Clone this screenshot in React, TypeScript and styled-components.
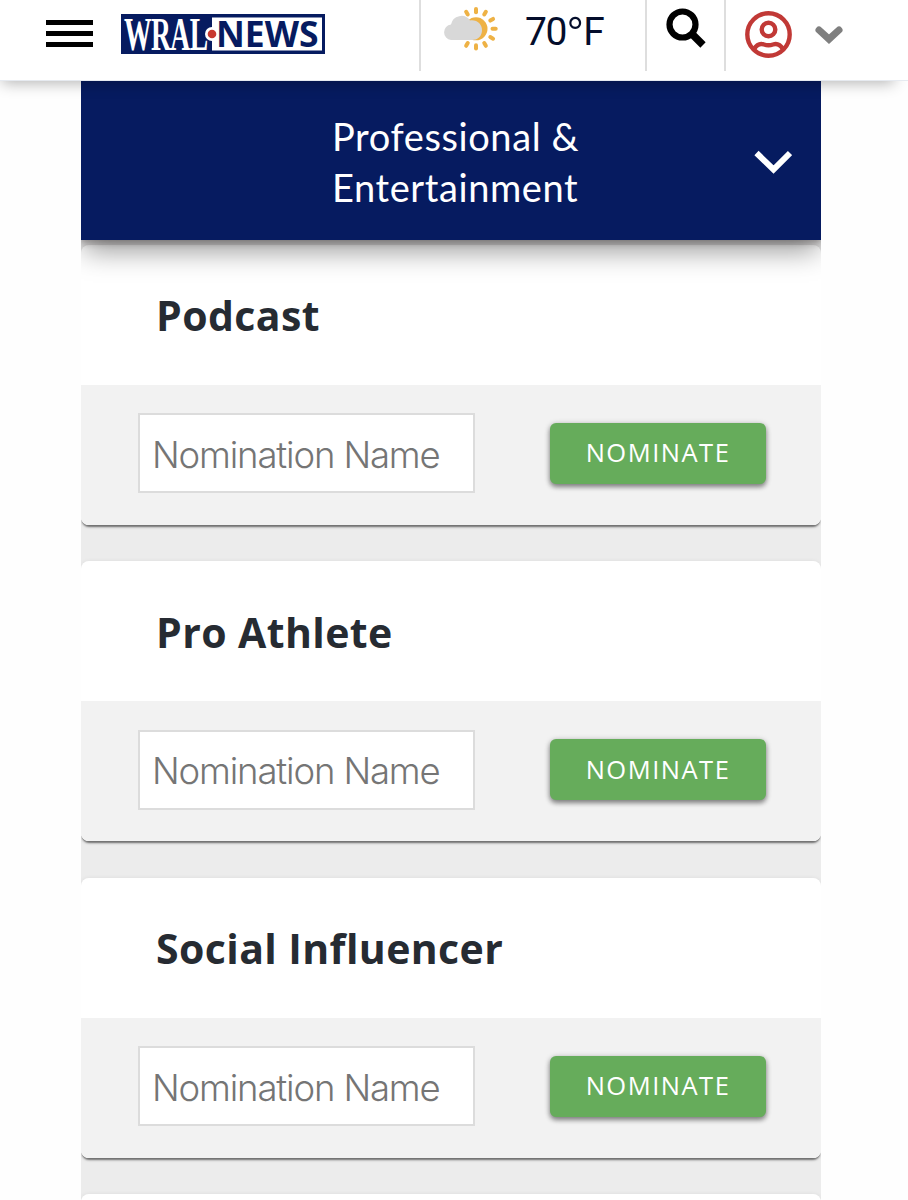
import { createGlobalStyle, styled } from 'styled-components';

const GlobalStyle = createGlobalStyle`
  * {
    box-sizing: border-box;
  }
  html,
  body {
    margin: 0;
    height: 1200px;
    overflow: hidden;
    background: #fefefe;
  }
`;

const Page = styled.div`
  width: 908px;
  height: 1200px;
  overflow: hidden;
  font-family: 'Open Sans', 'Noto Sans', sans-serif;
`;
const Header = styled.header`
  position: relative;
  z-index: 2;
  display: flex;
  align-items: flex-start;
  height: 81px;
  padding-left: 46px;
  background: #ffffff;
  border-bottom: 1px solid #e6eaf0;
  box-shadow: -6px 10px 14px -8px rgba(0, 0, 0, 0.3);
`;
const MenuButton = styled.div`
  display: flex;
  flex-direction: column;
  justify-content: space-between;
  width: 47px;
  height: 27px;
  margin-top: 20px;
`;
const MenuLine = styled.span`
  height: 4.6px;
  background: #000000;
`;
const LogoLink = styled.div`
  width: 204px;
  height: 40px;
  margin: 14px 0 0 28px;
`;
const LogoSvg = styled.svg`
  display: block;
  overflow: visible;
`;
const HeaderCell = styled.div<{ $width: number }>`
  display: flex;
  align-items: flex-start;
  width: ${(props) => props.$width}px;
  height: 71px;
  border-left: 2px solid #dedede;
`;
const Weather = styled(HeaderCell)`
  margin-left: 94px;
`;
const WeatherIcon = styled.svg`
  margin: 5px 0 0 22px;
`;
const Temperature = styled.span`
  margin: 9px 0 0 26px;
  font-family: Roboto, sans-serif;
  font-size: 39px;
  line-height: 46px;
  font-weight: 400;
  letter-spacing: -1.5px;
  color: #040d2b;
`;
const Degree = styled.span`
  font-size: 50px;
  line-height: 0;
  font-weight: 300;
  vertical-align: -8px;
`;
const SearchIcon = styled.svg`
  margin: 8px 0 0 19px;
`;
const UserIcon = styled.svg`
  margin: 11px 0 0 19px;
`;
const UserChevron = styled.svg`
  margin: 25px 0 0 22px;
`;
const Content = styled.main`
  width: 740px;
  margin-left: 81px;
  background: #ececec;
`;
const Banner = styled.div`
  position: relative;
  z-index: 1;
  display: grid;
  grid-template-columns: 251px 1fr 67px;
  align-items: center;
  height: 159px;
  background: #061b60;
  box-shadow: 0 3px 6px rgba(40, 30, 30, 0.3), 0 14px 26px -3px rgba(0, 0, 0, 0.4);
  clip-path: inset(0 0 -60px 0);
`;
const BannerTitle = styled.h2`
  grid-column: 2;
  margin: 2px 0 0;
  font-family: Lato, sans-serif;
  font-size: 38px;
  line-height: 51px;
  font-weight: 400;
  letter-spacing: 0.6px;
  color: #ffffff;
`;
const TitleLine = styled.span`
  display: block;
`;
const BannerChevron = styled.svg`
  margin-top: 2px;
`;
const CardList = styled.div`
  display: flex;
  flex-direction: column;
  gap: 36.5px;
  padding-top: 4.5px;
`;
// keeps the shadow inside the column
const CardShadow = styled.div`
  border-radius: 8px;
  box-shadow: 0 3px 2px -1px rgba(0, 0, 0, 0.5), 0 1px 5px rgba(0, 0, 0, 0.1);
  clip-path: inset(-3px 0 -10px 0);
`;
const Card = styled.section`
  height: 280px;
  overflow: hidden;
  border-radius: 8px;
  background: #ffffff;
`;
const CardTitle = styled.h3`
  display: flex;
  align-items: center;
  height: 140px;
  margin: 0;
  padding: 1px 0 0 75px;
  font-size: 41px;
  font-weight: 700;
  letter-spacing: 0.4px;
  color: #262b32;
`;
const CardForm = styled.div`
  display: flex;
  align-items: center;
  justify-content: space-between;
  height: 140px;
  padding: 0 55px 3px 57px;
  background: #f2f2f2;
`;
const NameInput = styled.input`
  width: 337px;
  height: 80px;
  padding: 3px 12px 0;
  border: 2px solid #dcdcdc;
  border-radius: 0;
  outline: none;
  background: #ffffff;
  font-family: Inter, 'Liberation Sans', sans-serif;
  font-size: 36.5px;
  font-weight: 300;
  letter-spacing: -1.15px;

  &::placeholder {
    color: #757575;
    opacity: 1;
  }
`;
const NominateButton = styled.button`
  width: 216px;
  height: 61px;
  padding: 0 0 2px;
  border: 0;
  border-radius: 6px;
  background: #66ac5b;
  box-shadow: 0 3px 5px rgba(0, 0, 0, 0.4), 0 1px 6px rgba(0, 0, 0, 0.2);
  font-family: 'Open Sans', sans-serif;
  font-size: 25.5px;
  letter-spacing: 1.5px;
  color: #ffffff;
`;

const categories = ['Podcast', 'Pro Athlete', 'Social Influencer'];

function Logo() {
  return (
    <LogoSvg width="204" height="40" viewBox="0 0 204 40">
      <rect width="204" height="40" fill="#061b60" />
      <rect x="91" y="3.5" width="110" height="33" fill="#ffffff" />
      <text
        transform="translate(3 35.5) scale(0.6 1)"
        fontFamily="Liberation Serif, serif"
        fontSize="46"
        fontWeight="700"
        letterSpacing="-1"
        fill="#ffffff"
      >
        WRAL
      </text>
      <circle cx="91" cy="20" r="7" fill="#ffffff" />
      <circle cx="91" cy="20" r="4.3" fill="#c8392f" />
      <text
        x="95"
        y="33"
        fontFamily="Open Sans, sans-serif"
        fontSize="35.5"
        fontWeight="700"
        fill="#061b60"
      >
        NEWS
      </text>
    </LogoSvg>
  );
}

function PartlyCloudy() {
  const rays = [-120, -90, -60, -30, 0, 30, 60, 90, 120];
  return (
    <WeatherIcon width="56" height="48" viewBox="0 0 56 48">
      <g stroke="#eeb245" strokeWidth="4" strokeLinecap="round">
        {rays.map((angle) => (
          <path key={angle} d="M49.5 23.8h3.2" transform={`rotate(${angle} 33 23.8)`} />
        ))}
      </g>
      <circle cx="33" cy="23.8" r="11.5" fill="#eeb245" />
      <path
        d="M8 35A7.8 7.8 0 0 1 8 19.5A10.5 10.5 0 0 1 27 15.5C34 14.5 39.500 19.5 39 26C38.5 32 34 35 29 35Z"
        fill="#d8d8d8"
      />
    </WeatherIcon>
  );
}

function App() {
  return (
    <Page>
      <GlobalStyle />
      <Header>
        <MenuButton>
          <MenuLine />
          <MenuLine />
          <MenuLine />
        </MenuButton>
        <LogoLink>
          <Logo />
        </LogoLink>
        <Weather $width={226}>
          <PartlyCloudy />
          <Temperature>
            70<Degree>°</Degree>F
          </Temperature>
        </Weather>
        <HeaderCell $width={79}>
          <SearchIcon width="42" height="42" viewBox="0 0 42 42" fill="none" stroke="#000000">
            <circle cx="16.5" cy="16.5" r="13" strokeWidth="6.2" />
            <path d="M26 26L37 37" strokeWidth="7.5" />
          </SearchIcon>
        </HeaderCell>
        <HeaderCell $width={183}>
          <UserIcon width="47" height="47" viewBox="0 0 47 47" fill="none" stroke="#c13936" strokeWidth="4.4">
            <circle cx="23.5" cy="23.5" r="21.2" />
            <circle cx="23.5" cy="18.5" r="6.8" />
            <path d="M9 38C12.5 32.5 16 32.5 19 33.5Q23.5 35 28 33.5C31 32.5 34.5 32.5 38 38" />
          </UserIcon>
          <UserChevron width="30" height="20" viewBox="0 0 30 20">
            <path
              d="M5 5L15 14.2L25 5"
              fill="none"
              stroke="#7f7f7f"
              strokeWidth="7"
              strokeLinecap="round"
            />
          </UserChevron>
        </HeaderCell>
      </Header>
      <Content>
        <Banner>
          <BannerTitle>
            <TitleLine>Professional &amp;</TitleLine>
            <TitleLine>Entertainment</TitleLine>
          </BannerTitle>
          <BannerChevron width="38" height="24" viewBox="0 0 38 24">
            <path d="M2.5 3L19.5 19.5L36 3" fill="none" stroke="#ffffff" strokeWidth="6" />
          </BannerChevron>
        </Banner>
        <CardList>
          {categories.map((category) => (
            <CardShadow key={category}>
              <Card>
                <CardTitle>{category}</CardTitle>
                <CardForm>
                  <NameInput placeholder="Nomination Name" />
                  <NominateButton>NOMINATE</NominateButton>
                </CardForm>
              </Card>
            </CardShadow>
          ))}
          {/* next card, only its top edge is on screen */}
          <CardShadow>
            <Card />
          </CardShadow>
        </CardList>
      </Content>
    </Page>
  );
}

export default App;
